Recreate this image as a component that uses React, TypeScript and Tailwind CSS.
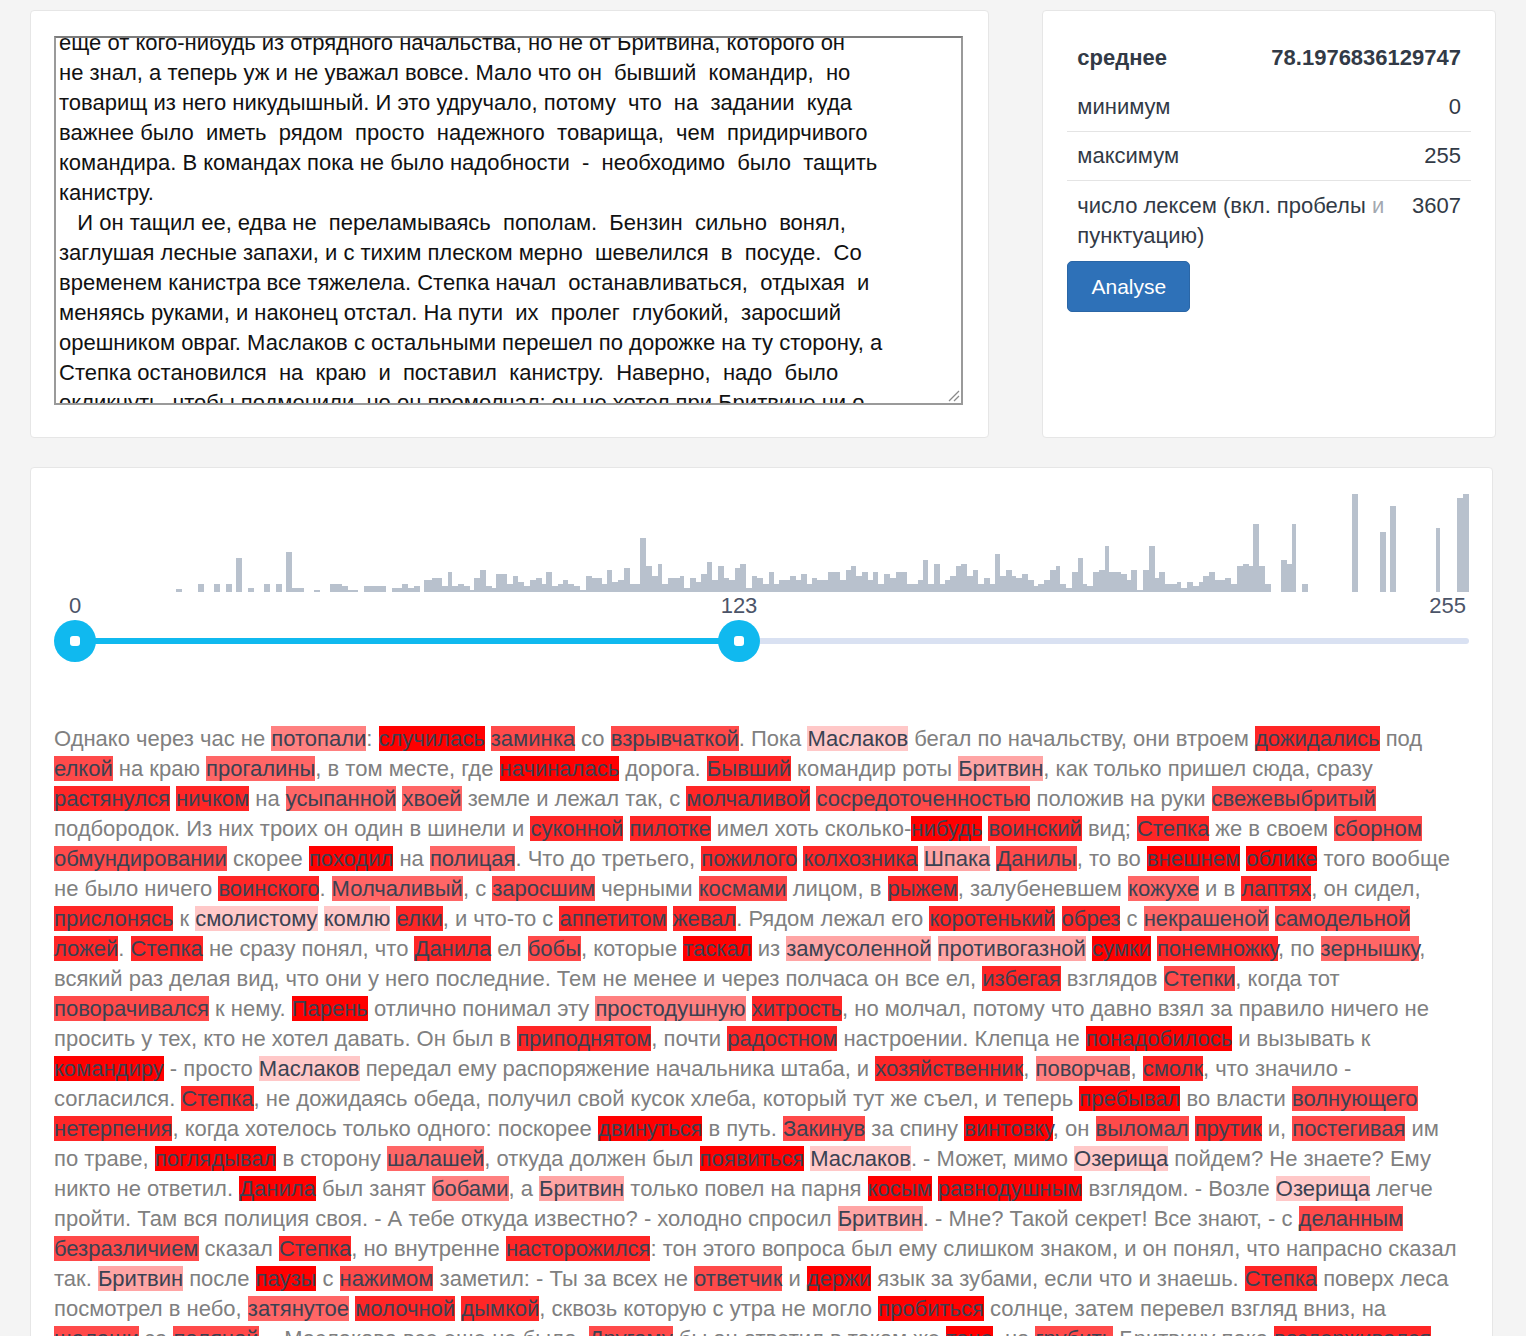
import React from "react";

const BARS: [number, number, number][] = [
  [176,182,3],[198,204,8],[214,220,8],[226,232,8],[236,242,34],[248,254,4],[264,270,8],[276,282,8],[286,292,40],[292,304,4],[314,320,2],[330,342,8],[342,348,6],[348,358,2],[364,386,6],[392,402,4],[402,408,8],[408,414,4],[414,420,6],[424,432,12],[432,442,14],[442,448,6],[448,452,20],[452,458,6],[458,464,8],[464,470,6],[470,474,2],[474,480,14],[480,486,22],[486,492,6],[492,496,4],[496,502,18],[502,507,18],[507,513,8],[513,518,16],[518,524,10],[524,530,6],[530,536,12],[536,542,14],[542,546,8],[546,552,20],[552,558,6],[558,563,8],[563,568,12],[568,574,8],[574,580,6],[580,586,2],[586,592,16],[592,602,14],[602,607,8],[607,612,22],[612,618,10],[618,624,12],[624,630,24],[630,640,8],[640,646,54],[646,652,26],[652,658,16],[658,662,28],[662,668,8],[668,674,14],[674,680,14],[680,684,16],[684,690,4],[690,696,14],[696,701,10],[701,707,18],[707,712,30],[712,718,12],[718,724,26],[724,729,14],[729,735,12],[735,740,24],[740,746,28],[746,752,4],[752,757,16],[757,763,14],[763,769,8],[769,774,20],[774,779,8],[779,790,12],[790,796,16],[796,801,12],[801,807,18],[807,812,8],[812,817,14],[817,828,12],[828,840,20],[840,846,12],[846,851,22],[851,856,26],[856,862,16],[862,868,20],[868,873,12],[873,878,20],[878,884,8],[884,890,18],[890,896,14],[896,907,20],[907,918,8],[918,923,12],[923,928,32],[928,934,8],[934,940,28],[940,945,8],[945,950,12],[950,956,16],[956,961,26],[961,967,28],[967,973,16],[973,978,22],[978,984,8],[984,990,14],[990,995,8],[995,1000,38],
  [1000,1006,16],[1006,1012,22],[1012,1016,16],[1016,1022,14],[1022,1028,18],[1028,1034,12],[1034,1038,6],[1038,1044,8],[1044,1050,12],[1050,1056,22],[1056,1060,26],[1060,1066,8],[1066,1072,4],[1072,1078,20],[1078,1083,34],[1083,1087,8],[1087,1093,6],[1093,1099,20],[1099,1105,22],[1105,1109,46],[1109,1121,20],[1121,1127,18],[1127,1131,12],[1131,1137,22],[1137,1143,2],[1143,1149,22],[1149,1155,46],[1155,1159,14],[1159,1165,20],[1165,1177,8],[1177,1181,10],[1181,1187,4],[1187,1193,10],[1193,1199,6],[1199,1203,10],[1203,1209,16],[1209,1215,20],[1215,1225,12],[1225,1231,14],[1231,1237,8],[1237,1243,26],[1243,1249,28],[1249,1253,26],[1253,1259,68],[1259,1265,26],[1265,1271,8],[1281,1287,32],[1287,1292,28],[1292,1296,68],[1302,1308,8],[1352,1358,98],[1380,1386,60],[1390,1396,86],[1436,1440,64],[1457,1463,94],[1463,1469,98],
];

const TEXTAREA = `еще от кого-нибудь из отрядного начальства, но не от Бритвина, которого он
не знал, а теперь уж и не уважал вовсе. Мало что он  бывший  командир,  но
товарищ из него никудышный. И это удручало, потому  что  на  задании  куда
важнее было  иметь  рядом  просто  надежного  товарища,  чем  придирчивого
командира. В командах пока не было надобности  -  необходимо  было  тащить
канистру.
   И он тащил ее, едва не  переламываясь  пополам.  Бензин  сильно  вонял,
заглушая лесные запахи, и с тихим плеском мерно  шевелился  в  посуде.  Со
временем канистра все тяжелела. Степка начал  останавливаться,  отдыхая  и
меняясь руками, и наконец отстал. На пути  их  пролег  глубокий,  заросший
орешником овраг. Маслаков с остальными перешел по дорожке на ту сторону, а
Степка остановился  на  краю  и  поставил  канистру.  Наверно,  надо  было
окликнуть, чтобы подменили, но он промолчал: он не хотел при Бритвине ни о
чем просить.`;

const LINES: string[] = [
  "Однако через час не [потопали|5]: [случилась|1] [заминка|3] со [взрывчаткой|3]. Пока [Маслаков|7] бегал по начальству, они втроем [дожидались|2] под",
  "[елкой|3] на краю [прогалины|4], в том месте, где [начиналась|1] дорога. [Бывший|2] командир роты [Бритвин|6], как только пришел сюда, сразу",
  "[растянулся|2] [ничком|2] на [усыпанной|4] [хвоей|4] земле и лежал так, с [молчаливой|2] [сосредоточенностью|3] положив на руки [свежевыбритый|3]",
  "подбородок. Из них троих он один в шинели и [суконной|2] [пилотке|2] имел хоть сколько-[нибудь|1] [воинский|2] вид; [Степка|2] же в своем [сборном|3]",
  "[обмундировании|3] скорее [походил|1] на [полицая|4]. Что до третьего, [пожилого|2] [колхозника|2] [Шпака|6] [Данилы|3], то во [внешнем|1] [облике|1] того вообще",
  "не было ничего [воинского|2]. [Молчаливый|4], с [заросшим|3] черными [космами|3] лицом, в [рыжем|2], залубеневшем [кожухе|4] и в [лаптях|2], он сидел,",
  "[прислонясь|2] к [смолистому|7] [комлю|7] [елки|2], и что-то с [аппетитом|2] [жевал|2]. Рядом лежал его [коротенький|2] [обрез|2] с [некрашеной|4] [самодельной|3]",
  "[ложей|2]. [Степка|2] не сразу понял, что [Данила|2] ел [бобы|3], которые [таскал|1] из [замусоленной|6] [противогазной|6] [сумки|1] [понемножку|2], по [зернышку|4],",
  "всякий раз делая вид, что они у него последние. Тем не менее и через полчаса он все ел, [избегая|2] взглядов [Степки|3], когда тот",
  "[поворачивался|3] к нему. [Парень|1] отлично понимал эту [простодушную|5] [хитрость|2], но молчал, потому что давно взял за правило ничего не",
  "просить у тех, кто не хотел давать. Он был в [приподнятом|2], почти [радостном|2] настроении. Клепца не [понадобилось|1] и вызывать к",
  "[командиру|1] - просто [Маслаков|7] передал ему распоряжение начальника штаба, и [хозяйственник|2], [поворчав|5], [смолк|2], что значило -",
  "согласился. [Степка|2], не дожидаясь обеда, получил свой кусок хлеба, который тут же съел, и теперь [пребывал|1] во власти [волнующего|3]",
  "[нетерпения|2], когда хотелось только одного: поскорее [двинуться|1] в путь. [Закинув|3] за спину [винтовку|1], он [выломал|3] [прутик|2] и, [постегивая|3] им",
  "по траве, [поглядывал|1] в сторону [шалашей|4], откуда должен был [появиться|1] [Маслаков|7]. - Может, мимо [Озерища|7] пойдем? Не знаете? Ему",
  "никто не ответил. [Данила|1] был занят [бобами|5], а [Бритвин|6] только повел на парня [косым|1] [равнодушным|1] взглядом. - Возле [Озерища|7] легче",
  "пройти. Там вся полиция своя. - А тебе откуда известно? - холодно спросил [Бритвин|6]. - Мне? Такой секрет! Все знают, - с [деланным|3]",
  "[безразличием|3] сказал [Степка|2], но внутренне [насторожился|2]: тон этого вопроса был ему слишком знаком, и он понял, что напрасно сказал",
  "так. [Бритвин|6] после [паузы|1] с [нажимом|3] заметил: - Ты за всех не [ответчик|3] и [держи|1] язык за зубами, если что и знаешь. [Степка|2] поверх леса",
  "посмотрел в небо, [затянутое|4] [молочной|2] [дымкой|2], сквозь которую с утра не могло [пробиться|1] солнце, затем перевел взгляд вниз, на",
  "[шалаши|3] за [поляной|3]. - Маслакова все еще не было. [Другому|3] бы он ответил в таком же [тоне|1], но [грубить|3] Бритвину пока [воздерживался|2]",
];

const BG: Record<string, string> = {
  "1": "bg-[#ff0000]",
  "2": "bg-[#ff2626]",
  "3": "bg-[#ff4a4a]",
  "4": "bg-[#ff6666]",
  "5": "bg-[#ff8080]",
  "6": "bg-[#ffa5a5]",
  "7": "bg-[#ffc8c8]",
};

function Line({ text }: { text: string }) {
  const parts = text.split(/(\[[^\]]+\])/);
  return (
    <div className="h-[30px] leading-[30px] whitespace-pre">
      {parts.map((p, i) => {
        const m = p.match(/^\[([^|]+)\|(\d)\]$/);
        if (m) {
          return (
            <span key={i} className={`${BG[m[2]]} text-[#3a4252]`}>
              {m[1]}
            </span>
          );
        }
        return <span key={i}>{p}</span>;
      })}
    </div>
  );
}

function Histogram() {
  return (
    <svg width={1415} height={101} className="block">
      {BARS.map(([x0, x1, h], i) => (
        <rect key={i} x={x0 - 54} y={101 - h} width={x1 - x0} height={h} fill="#b8c1cd" />
      ))}
    </svg>
  );
}

function Handle({ left }: { left: number }) {
  return (
    <div
      className="absolute top-0 w-[42px] h-[42px] rounded-full bg-[#10b9ef] flex items-center justify-center"
      style={{ left: left - 21 }}
    >
      <div className="w-[10px] h-[10px] rounded-[3px] bg-white" />
    </div>
  );
}

function Row({
  label,
  value,
  bold,
  border,
  tall,
}: {
  label: React.ReactNode;
  value: string;
  bold?: boolean;
  border?: boolean;
  tall?: boolean;
}) {
  return (
    <div
      className={`flex justify-between items-start px-[10px] py-[10px] border-t ${
        border ? "border-[#e4e4e4]" : "border-transparent"
      } ${bold ? "font-bold" : ""} ${tall ? "leading-[30px]" : "leading-[28px]"}`}
    >
      <div className="whitespace-nowrap">{label}</div>
      <div className="whitespace-nowrap text-right">{value}</div>
    </div>
  );
}

export default function App() {
  return (
    <div className="min-h-screen bg-[#f4f4f4] pt-[10px] px-[30px] font-['Liberation_Sans',Helvetica,Arial,sans-serif] text-[22px]">
      <div className="flex gap-[53px] items-stretch">
        <div className="w-[960px] bg-white border border-[#e6e6e6] rounded-[4px] pt-[25px] pb-[32px] px-[23px]">
          <div className="relative w-[909px] h-[369px] border-2 border-[#9a9a9a] border-t-[#7c7c7c] overflow-hidden bg-white">
            <div className="-mt-[10px] pl-[3px] whitespace-pre leading-[30px] text-[22px] text-[#111]">
              {TEXTAREA}
            </div>
            <svg className="absolute right-[1px] bottom-[1px]" width="14" height="14" viewBox="0 0 14 14">
              <line x1="3" y1="13" x2="13" y2="3" stroke="#8a8a8a" strokeWidth="1.2" />
              <line x1="8" y1="13" x2="13" y2="8" stroke="#8a8a8a" strokeWidth="1.2" />
            </svg>
          </div>
        </div>
        <div className="w-[454px] bg-white border border-[#e6e6e6] rounded-[4px] pt-[22px] px-[24px] flex flex-col items-start">
          <div className="w-full text-[22px] text-[#323a46]">
            <Row label="среднее" value="78.1976836129747" bold />
            <Row label="минимум" value="0" />
            <Row label="максимум" value="255" border />
            <Row
              border
              tall
              label={
                <>
                  число лексем (вкл. пробелы <span className="text-[#a3a8b0]">и</span>
                  <br />
                  пунктуацию)
                </>
              }
              value="3607"
            />
          </div>
          <button className="w-[123px] h-[51px] rounded-[5px] bg-[#2e71b8] border border-[#2a66a6] text-white text-[21px] leading-none">
            Analyse
          </button>
        </div>
      </div>

      <div className="mt-[29px] w-[1463px] bg-white border border-[#e6e6e6] rounded-[4px] pt-[23px] px-[23px] pb-[10px] overflow-hidden flex flex-col">
        <Histogram />
        <div className="flex items-center h-[24px] mt-[2px] text-[#4b5468] leading-[24px]">
          <span className="w-[42px] text-center">0</span>
          <span className="w-[42px] ml-[622px] text-center">123</span>
          <span className="ml-auto mr-[3px]">255</span>
        </div>
        <div className="relative h-[42px] mt-[2px]">
          <div className="absolute left-[21px] right-0 top-[18px] h-[6px] rounded-full bg-[#d9e1f2]" />
          <div className="absolute left-[21px] w-[664px] top-[18px] h-[6px] bg-[#10b9ef]" />
          <Handle left={21} />
          <Handle left={685} />
        </div>
        <div className="mt-[62px] text-[#808080] text-[22px]">
          {LINES.map((l, i) => (
            <Line key={i} text={l} />
          ))}
        </div>
      </div>
    </div>
  );
}
